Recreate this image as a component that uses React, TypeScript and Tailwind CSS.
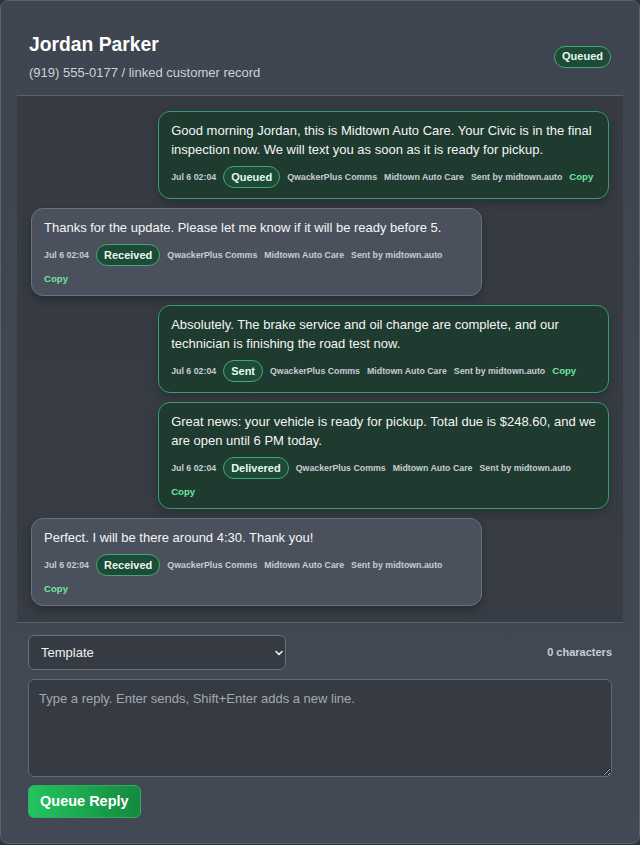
import React from 'react';

type Message = {
  id: number;
  direction: 'out' | 'in';
  text: string;
  status: string;
};

const messages: Message[] = [
  {
    id: 1,
    direction: 'out',
    text: 'Good morning Jordan, this is Midtown Auto Care. Your Civic is in the final inspection now. We will text you as soon as it is ready for pickup.',
    status: 'Queued',
  },
  {
    id: 2,
    direction: 'in',
    text: 'Thanks for the update. Please let me know if it will be ready before 5.',
    status: 'Received',
  },
  {
    id: 3,
    direction: 'out',
    text: 'Absolutely. The brake service and oil change are complete, and our technician is finishing the road test now.',
    status: 'Sent',
  },
  {
    id: 4,
    direction: 'out',
    text: 'Great news: your vehicle is ready for pickup. Total due is $248.60, and we are open until 6 PM today.',
    status: 'Delivered',
  },
  {
    id: 5,
    direction: 'in',
    text: 'Perfect. I will be there around 4:30. Thank you!',
    status: 'Received',
  },
];

function StatusPill({ label }: { label: string }) {
  return (
    <span className="inline-flex h-[22px] items-center rounded-full border border-[#3fa878] bg-[#1e4a37] px-[7px] text-[11px] font-bold leading-none text-[#e3fbef]">
      {label}
    </span>
  );
}

function Bubble({ m }: { m: Message }) {
  const out = m.direction === 'out';
  return (
    <div className={out ? 'flex justify-end' : 'flex justify-start'}>
      <div
        className={
          out
            ? 'max-w-[78%] rounded-xl border border-[#3a9c6e] bg-[#1f3a2e] px-3 pt-[9px] pb-[10px] shadow-[0_4px_10px_rgba(0,0,0,0.25)]'
            : 'max-w-[78%] rounded-xl border border-[#69717d] bg-[#4a515d] px-3 pt-[9px] pb-[10px] shadow-[0_4px_10px_rgba(0,0,0,0.3)]'
        }
      >
        <p className="text-[13px] leading-[19px] text-[#f4f5f7]">{m.text}</p>
        <div className="mt-[7px] flex flex-wrap items-center gap-x-[7px] gap-y-[7px] text-[8.8px] font-bold leading-[12px] text-[#c7ccd4]">
          <span>Jul 6 02:04</span>
          <StatusPill label={m.status} />
          <span>QwackerPlus Comms</span>
          <span>Midtown Auto Care</span>
          <span>Sent by midtown.auto</span>
          <button className="text-[9.6px] font-bold leading-[12px] text-[#6fe6a0]">Copy</button>
        </div>
      </div>
    </div>
  );
}

export default function App() {
  return (
    <div className="min-h-[845px] bg-[#2f343b] font-['Liberation_Sans',Arial,sans-serif]">
      <div className="rounded-lg border border-[#5a626e] bg-gradient-to-b from-[#3f4550] to-[#424954] p-4">
        <header className="flex items-center justify-between border-b border-[#596270] px-3 pt-4 pb-[13px]">
          <div>
            <h1 className="text-[19.3px] font-bold leading-6 text-white">Jordan Parker</h1>
            <p className="mt-[6px] text-[13px] leading-[19px] text-[#ccd1d8]">
              (919) 555-0177 / linked customer record
            </p>
          </div>
          <div className="-mt-[4px]">
            <StatusPill label="Queued" />
          </div>
        </header>

        <div className="flex flex-col gap-[9px] bg-gradient-to-b from-[#363b43] to-[#383d45] px-[14px] pt-[15px] pb-[16px]">
          {messages.map((m) => (
            <Bubble key={m.id} m={m} />
          ))}
        </div>

        <div className="border-t border-[#596270] px-[11px] pt-[12px] pb-[9px]">
          <div className="flex items-center justify-between">
            <div className="relative w-[258px]">
              <select className="h-[35px] w-full appearance-none rounded-md border border-[#6a727e] bg-[#363b43] pl-3 text-[13px] text-[#eef0f3] outline-none">
                <option>Template</option>
              </select>
              <svg
                className="pointer-events-none absolute right-[3px] top-1/2 -translate-y-1/2"
                width="8"
                height="6"
                viewBox="0 0 8 6"
                fill="none"
              >
                <path d="M1 1.5 4 4.5 7 1.5" stroke="#f1f3f5" strokeWidth="1.6" strokeLinecap="round" strokeLinejoin="round" />
              </svg>
            </div>
            <span className="text-[11px] font-bold text-[#c9ced5]">0 characters</span>
          </div>
          <textarea
            className="mt-[9px] block h-[98px] w-full rounded-md border border-[#626a76] bg-[#363b43] px-[10px] py-[9px] text-[13px] leading-[19px] text-[#eef0f3] outline-none placeholder:text-[#a3a9b2]"
            placeholder="Type a reply. Enter sends, Shift+Enter adds a new line."
          />
          <button className="mt-[8px] h-[33px] rounded-md border border-[#2fae5f] bg-gradient-to-r from-[#22c55e] to-[#15893f] px-[11px] text-[14.5px] font-bold text-white">
            Queue Reply
          </button>
        </div>
      </div>
    </div>
  );
}
